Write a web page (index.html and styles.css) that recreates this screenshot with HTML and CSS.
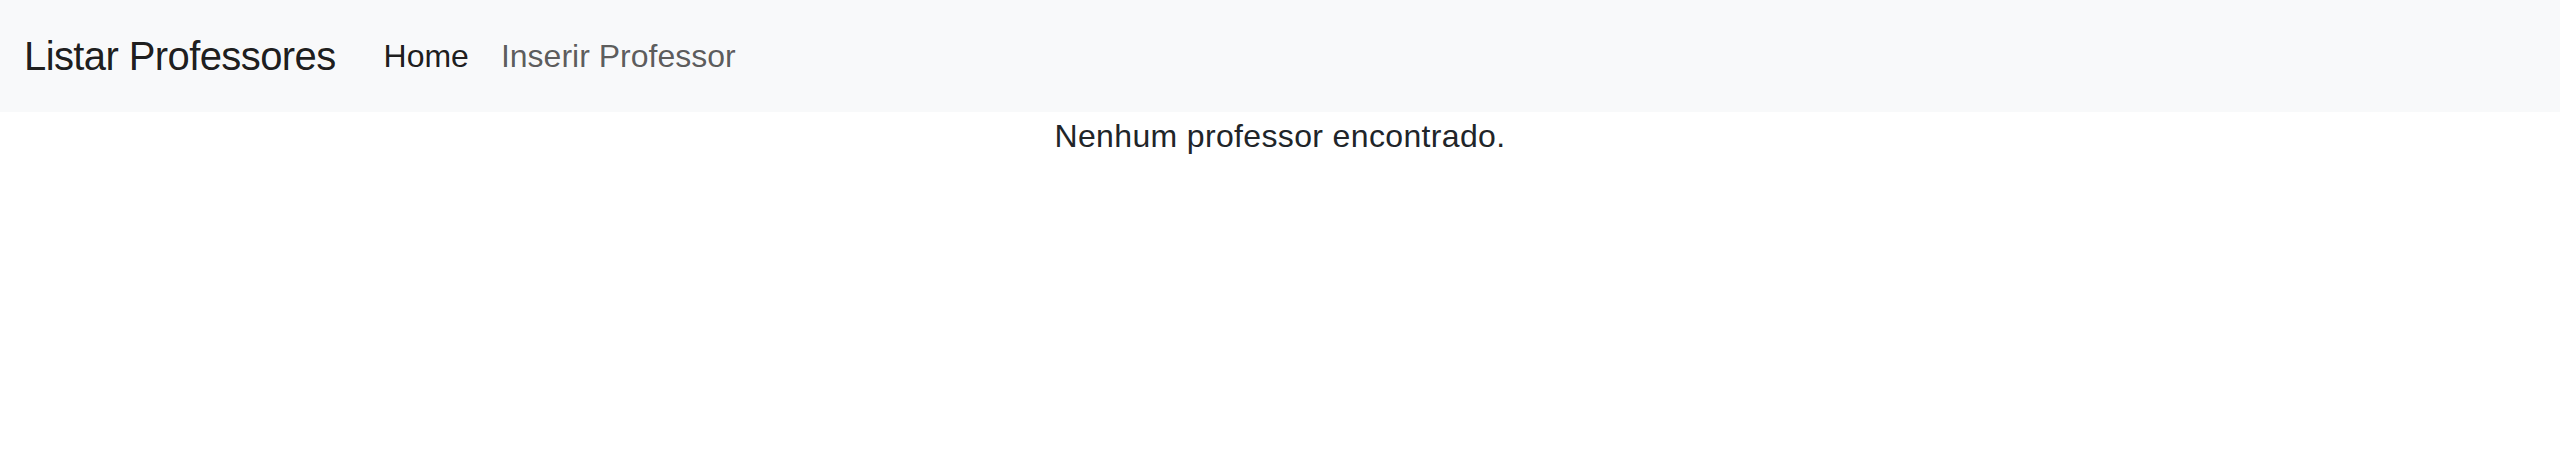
FILE: index.html
```html
<!DOCTYPE html>
<html lang="pt">
<head>
<meta charset="utf-8">
<title>Listar Professores</title>
<link rel="stylesheet" href="styles.css">
</head>
<body>
<nav class="navbar">
  <div class="container">
    <a class="brand" href="#">Listar Professores</a>
    <ul class="nav">
      <li><a class="nav-link active" href="#">Home</a></li>
      <li><a class="nav-link" href="#">Inserir Professor</a></li>
    </ul>
  </div>
</nav>
<main class="content">
  <p class="empty">Nenhum professor encontrado.</p>
</main>
</body>
</html>
```
FILE: styles.css
```css
* { box-sizing: border-box; }
html, body { margin: 0; padding: 0; }
body {
  font-family: "Liberation Sans", Arial, sans-serif;
  font-size: 32px;
  line-height: 1.5;
  color: #212529;
  background: #fff;
}
.navbar {
  background: #f8f9fa;
  padding: 16px 0;
}
.container {
  display: flex;
  align-items: center;
  padding: 0 24px;
}
.brand {
  font-size: 40px;
  line-height: 1.5;
  letter-spacing: -0.6px;
  padding: 9px 0;
  margin-right: 32px;
  color: rgba(0, 0, 0, 0.9);
  text-decoration: none;
}
.nav {
  display: flex;
  list-style: none;
  margin: 0;
  padding: 0;
}
.nav-link {
  display: block;
  padding: 16px;
  color: rgba(0, 0, 0, 0.65);
  text-decoration: none;
}
.nav-link.active { color: rgba(0, 0, 0, 0.9); }
.content { text-align: center; }
.empty { margin: 0; letter-spacing: 0.35px; }
```
